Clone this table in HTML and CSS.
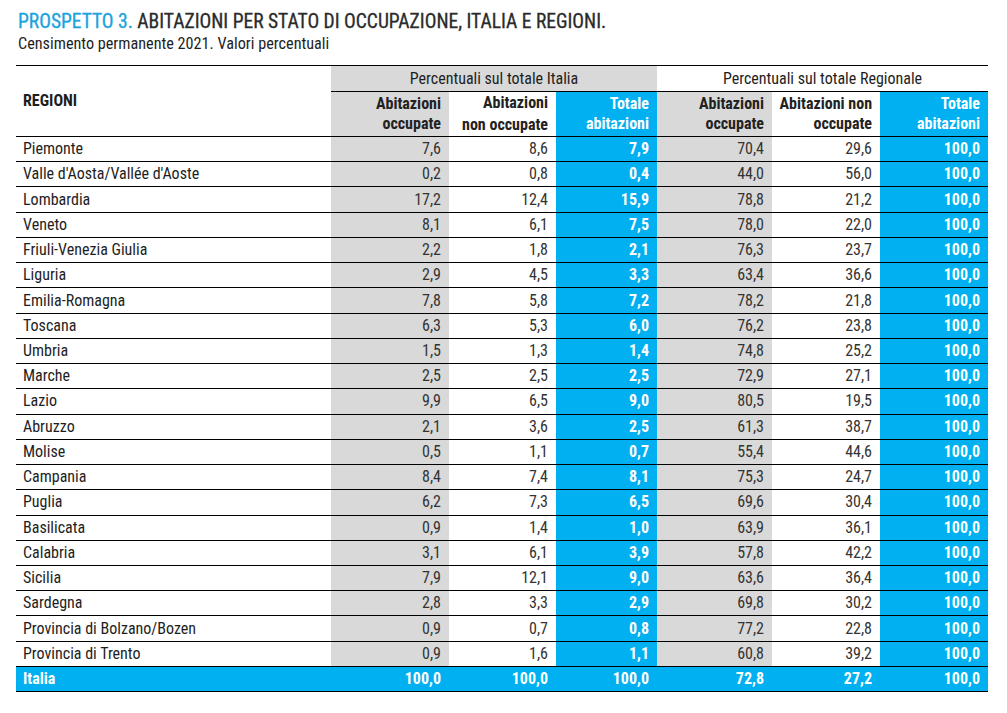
FILE: index.html
```html
<!DOCTYPE html>
<html lang="it">
<head>
<meta charset="utf-8">
<title>Prospetto 3</title>
<link rel="stylesheet" href="styles.css">
</head>
<body>
<div class="page">
  <h1 class="title"><span class="title-num">PROSPETTO 3.</span> ABITAZIONI PER STATO DI OCCUPAZIONE, ITALIA E REGIONI.</h1>
  <p class="subtitle">Censimento permanente 2021. Valori percentuali</p>
  <table class="data">
    <colgroup>
      <col class="c-reg"><col class="c1"><col class="c2"><col class="c3"><col class="c4"><col class="c5"><col class="c6">
    </colgroup>
    <thead>
      <tr class="grp">
        <th class="reg-head" rowspan="2">REGIONI</th>
        <th class="grp-it" colspan="3">Percentuali sul totale Italia</th>
        <th class="grp-rg" colspan="3">Percentuali sul totale Regionale</th>
      </tr>
      <tr class="sub">
        <th class="grey">Abitazioni<br>occupate</th>
        <th class="white wide">Abitazioni<br>non occupate</th>
        <th class="blue">Totale<br>abitazioni</th>
        <th class="grey">Abitazioni<br>occupate</th>
        <th class="white">Abitazioni non<br>occupate</th>
        <th class="blue">Totale<br>abitazioni</th>
      </tr>
    </thead>
    <tbody>
      <tr><td class="reg">Piemonte</td><td class="grey">7,6</td><td>8,6</td><td class="blue">7,9</td><td class="grey">70,4</td><td>29,6</td><td class="blue">100,0</td></tr>
      <tr><td class="reg">Valle d'Aosta/Vallée d'Aoste</td><td class="grey">0,2</td><td>0,8</td><td class="blue">0,4</td><td class="grey">44,0</td><td>56,0</td><td class="blue">100,0</td></tr>
      <tr><td class="reg">Lombardia</td><td class="grey">17,2</td><td>12,4</td><td class="blue">15,9</td><td class="grey">78,8</td><td>21,2</td><td class="blue">100,0</td></tr>
      <tr><td class="reg">Veneto</td><td class="grey">8,1</td><td>6,1</td><td class="blue">7,5</td><td class="grey">78,0</td><td>22,0</td><td class="blue">100,0</td></tr>
      <tr><td class="reg">Friuli-Venezia Giulia</td><td class="grey">2,2</td><td>1,8</td><td class="blue">2,1</td><td class="grey">76,3</td><td>23,7</td><td class="blue">100,0</td></tr>
      <tr><td class="reg">Liguria</td><td class="grey">2,9</td><td>4,5</td><td class="blue">3,3</td><td class="grey">63,4</td><td>36,6</td><td class="blue">100,0</td></tr>
      <tr><td class="reg">Emilia-Romagna</td><td class="grey">7,8</td><td>5,8</td><td class="blue">7,2</td><td class="grey">78,2</td><td>21,8</td><td class="blue">100,0</td></tr>
      <tr><td class="reg">Toscana</td><td class="grey">6,3</td><td>5,3</td><td class="blue">6,0</td><td class="grey">76,2</td><td>23,8</td><td class="blue">100,0</td></tr>
      <tr><td class="reg">Umbria</td><td class="grey">1,5</td><td>1,3</td><td class="blue">1,4</td><td class="grey">74,8</td><td>25,2</td><td class="blue">100,0</td></tr>
      <tr><td class="reg">Marche</td><td class="grey">2,5</td><td>2,5</td><td class="blue">2,5</td><td class="grey">72,9</td><td>27,1</td><td class="blue">100,0</td></tr>
      <tr><td class="reg">Lazio</td><td class="grey">9,9</td><td>6,5</td><td class="blue">9,0</td><td class="grey">80,5</td><td>19,5</td><td class="blue">100,0</td></tr>
      <tr><td class="reg">Abruzzo</td><td class="grey">2,1</td><td>3,6</td><td class="blue">2,5</td><td class="grey">61,3</td><td>38,7</td><td class="blue">100,0</td></tr>
      <tr><td class="reg">Molise</td><td class="grey">0,5</td><td>1,1</td><td class="blue">0,7</td><td class="grey">55,4</td><td>44,6</td><td class="blue">100,0</td></tr>
      <tr><td class="reg">Campania</td><td class="grey">8,4</td><td>7,4</td><td class="blue">8,1</td><td class="grey">75,3</td><td>24,7</td><td class="blue">100,0</td></tr>
      <tr><td class="reg">Puglia</td><td class="grey">6,2</td><td>7,3</td><td class="blue">6,5</td><td class="grey">69,6</td><td>30,4</td><td class="blue">100,0</td></tr>
      <tr><td class="reg">Basilicata</td><td class="grey">0,9</td><td>1,4</td><td class="blue">1,0</td><td class="grey">63,9</td><td>36,1</td><td class="blue">100,0</td></tr>
      <tr><td class="reg">Calabria</td><td class="grey">3,1</td><td>6,1</td><td class="blue">3,9</td><td class="grey">57,8</td><td>42,2</td><td class="blue">100,0</td></tr>
      <tr><td class="reg">Sicilia</td><td class="grey">7,9</td><td>12,1</td><td class="blue">9,0</td><td class="grey">63,6</td><td>36,4</td><td class="blue">100,0</td></tr>
      <tr><td class="reg">Sardegna</td><td class="grey">2,8</td><td>3,3</td><td class="blue">2,9</td><td class="grey">69,8</td><td>30,2</td><td class="blue">100,0</td></tr>
      <tr><td class="reg">Provincia di Bolzano/Bozen</td><td class="grey">0,9</td><td>0,7</td><td class="blue">0,8</td><td class="grey">77,2</td><td>22,8</td><td class="blue">100,0</td></tr>
      <tr><td class="reg">Provincia di Trento</td><td class="grey">0,9</td><td>1,6</td><td class="blue">1,1</td><td class="grey">60,8</td><td>39,2</td><td class="blue">100,0</td></tr>
      <tr class="total"><td class="reg">Italia</td><td>100,0</td><td>100,0</td><td>100,0</td><td>72,8</td><td>27,2</td><td>100,0</td></tr>
    </tbody>
  </table>
</div>
</body>
</html>
```

FILE: styles.css
```css
html, body {
  margin: 0;
  padding: 0;
  background: #ffffff;
}

body {
  font-family: "Roboto Condensed", "Liberation Sans", Arial, sans-serif;
  color: #222222;
}

.page {
  padding: 11px 19px 0 16px;
}

.title {
  margin: 0 0 0 2px;
  font-size: 19.5px;
  line-height: 21px;
  font-weight: normal;
  color: #2b2b2b;
  -webkit-text-stroke: 0.3px #2b2b2b;
}

.title-num {
  color: #1aa3dc;
  -webkit-text-stroke: 0.3px #1aa3dc;
}

.subtitle {
  margin: 3px 0 0 2px;
  font-size: 16.2px;
  line-height: 18px;
  color: #1e1e1e;
}

.data {
  margin-top: 12px;
  width: 972px;
  border-collapse: collapse;
  table-layout: fixed;
  font-size: 16px;
}

.c-reg { width: 315px; }
.c1 { width: 118px; }
.c2 { width: 107px; }
.c3 { width: 101px; }
.c4 { width: 115px; }
.c5 { width: 108px; }
.c6 { width: 108px; }

.data th {
  padding: 0;
  vertical-align: middle;
}

.data tr.grp th {
  border-top: 1px solid #000;
  height: 25px;
  font-weight: normal;
  text-align: center;
  line-height: 18px;
  color: #1e1e1e;
}

.data tr.grp th.reg-head {
  text-align: left;
  padding-left: 7px;
  font-weight: bold;
  border-bottom: 1px solid #000;
  background: #fff;
}

.data tr.grp th.grp-it {
  background: #d9d9d9;
  border-bottom: 1px solid #000;
}

.data tr.grp th.grp-rg {
  background: #fff;
  border-bottom: 1px solid #000;
}

.data tr.sub th {
  height: 44px;
  padding-right: 8px;
  text-align: right;
  font-weight: bold;
  line-height: 20px;
  border-bottom: 1px solid #000;
  color: #222;
}

.data tr.sub th.wide {
  line-height: 22px;
}

.grey { background: #d9d9d9; }
.white { background: #ffffff; }
.blue { background: #00b0f0; }

.data tr.sub th.blue {
  color: #fff;
}

.data tbody td {
  height: 24.24px;
  padding: 0 8px 0 0;
  text-align: right;
  vertical-align: middle;
  line-height: 18px;
  border-bottom: 1px solid #000;
  color: #333;
  white-space: nowrap;
}

.data tbody td.reg {
  text-align: left;
  padding-left: 7px;
  color: #1e1e1e;
}

.data tbody td.blue {
  color: #fff;
  font-weight: bold;
}

.data tr.total td {
  background: #00b0f0;
  color: #fff;
  font-weight: bold;
}

.data tr.total td.reg {
  color: #fff;
}
```
